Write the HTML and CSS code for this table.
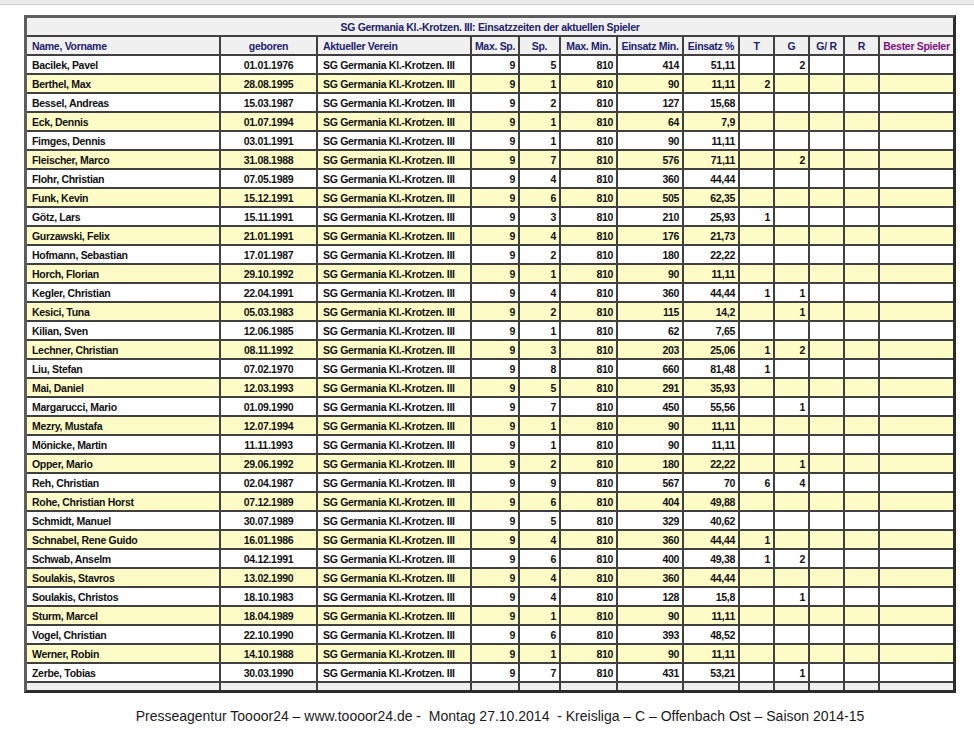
FILE: index.html
```html
<!DOCTYPE html>
<html lang="de">
<head>
<meta charset="utf-8">
<title>Einsatzzeiten</title>
<link rel="stylesheet" href="styles.css">
</head>
<body>
<div class="topbar"></div>
<div class="frame">
  <div class="grid">
    <div class="c title">SG Germania Kl.-Krotzen. III: Einsatzzeiten der aktuellen Spieler</div>
    <div class="row head">
      <div class="c l">Name, Vorname</div><div class="c m">geboren</div><div class="c l">Aktueller Verein</div><div class="c m">Max. Sp.</div><div class="c m">Sp.</div><div class="c m">Max. Min.</div><div class="c m">Einsatz Min.</div><div class="c m">Einsatz %</div><div class="c m">T</div><div class="c m">G</div><div class="c m">G/ R</div><div class="c m">R</div><div class="c m best">Bester Spieler</div>
    </div>
    <div class="row"><div class="c l">Bacilek, Pavel</div><div class="c m">01.01.1976</div><div class="c l">SG Germania Kl.-Krotzen. III</div><div class="c r">9</div><div class="c r">5</div><div class="c r">810</div><div class="c r">414</div><div class="c r">51,11</div><div class="c r"></div><div class="c r">2</div><div class="c r"></div><div class="c r"></div><div class="c r"></div></div>
    <div class="row alt"><div class="c l">Berthel, Max</div><div class="c m">28.08.1995</div><div class="c l">SG Germania Kl.-Krotzen. III</div><div class="c r">9</div><div class="c r">1</div><div class="c r">810</div><div class="c r">90</div><div class="c r">11,11</div><div class="c r">2</div><div class="c r"></div><div class="c r"></div><div class="c r"></div><div class="c r"></div></div>
    <div class="row"><div class="c l">Bessel, Andreas</div><div class="c m">15.03.1987</div><div class="c l">SG Germania Kl.-Krotzen. III</div><div class="c r">9</div><div class="c r">2</div><div class="c r">810</div><div class="c r">127</div><div class="c r">15,68</div><div class="c r"></div><div class="c r"></div><div class="c r"></div><div class="c r"></div><div class="c r"></div></div>
    <div class="row alt"><div class="c l">Eck, Dennis</div><div class="c m">01.07.1994</div><div class="c l">SG Germania Kl.-Krotzen. III</div><div class="c r">9</div><div class="c r">1</div><div class="c r">810</div><div class="c r">64</div><div class="c r">7,9</div><div class="c r"></div><div class="c r"></div><div class="c r"></div><div class="c r"></div><div class="c r"></div></div>
    <div class="row"><div class="c l">Fimges, Dennis</div><div class="c m">03.01.1991</div><div class="c l">SG Germania Kl.-Krotzen. III</div><div class="c r">9</div><div class="c r">1</div><div class="c r">810</div><div class="c r">90</div><div class="c r">11,11</div><div class="c r"></div><div class="c r"></div><div class="c r"></div><div class="c r"></div><div class="c r"></div></div>
    <div class="row alt"><div class="c l">Fleischer, Marco</div><div class="c m">31.08.1988</div><div class="c l">SG Germania Kl.-Krotzen. III</div><div class="c r">9</div><div class="c r">7</div><div class="c r">810</div><div class="c r">576</div><div class="c r">71,11</div><div class="c r"></div><div class="c r">2</div><div class="c r"></div><div class="c r"></div><div class="c r"></div></div>
    <div class="row"><div class="c l">Flohr, Christian</div><div class="c m">07.05.1989</div><div class="c l">SG Germania Kl.-Krotzen. III</div><div class="c r">9</div><div class="c r">4</div><div class="c r">810</div><div class="c r">360</div><div class="c r">44,44</div><div class="c r"></div><div class="c r"></div><div class="c r"></div><div class="c r"></div><div class="c r"></div></div>
    <div class="row alt"><div class="c l">Funk, Kevin</div><div class="c m">15.12.1991</div><div class="c l">SG Germania Kl.-Krotzen. III</div><div class="c r">9</div><div class="c r">6</div><div class="c r">810</div><div class="c r">505</div><div class="c r">62,35</div><div class="c r"></div><div class="c r"></div><div class="c r"></div><div class="c r"></div><div class="c r"></div></div>
    <div class="row"><div class="c l">Götz, Lars</div><div class="c m">15.11.1991</div><div class="c l">SG Germania Kl.-Krotzen. III</div><div class="c r">9</div><div class="c r">3</div><div class="c r">810</div><div class="c r">210</div><div class="c r">25,93</div><div class="c r">1</div><div class="c r"></div><div class="c r"></div><div class="c r"></div><div class="c r"></div></div>
    <div class="row alt"><div class="c l">Gurzawski, Felix</div><div class="c m">21.01.1991</div><div class="c l">SG Germania Kl.-Krotzen. III</div><div class="c r">9</div><div class="c r">4</div><div class="c r">810</div><div class="c r">176</div><div class="c r">21,73</div><div class="c r"></div><div class="c r"></div><div class="c r"></div><div class="c r"></div><div class="c r"></div></div>
    <div class="row"><div class="c l">Hofmann, Sebastian</div><div class="c m">17.01.1987</div><div class="c l">SG Germania Kl.-Krotzen. III</div><div class="c r">9</div><div class="c r">2</div><div class="c r">810</div><div class="c r">180</div><div class="c r">22,22</div><div class="c r"></div><div class="c r"></div><div class="c r"></div><div class="c r"></div><div class="c r"></div></div>
    <div class="row alt"><div class="c l">Horch, Florian</div><div class="c m">29.10.1992</div><div class="c l">SG Germania Kl.-Krotzen. III</div><div class="c r">9</div><div class="c r">1</div><div class="c r">810</div><div class="c r">90</div><div class="c r">11,11</div><div class="c r"></div><div class="c r"></div><div class="c r"></div><div class="c r"></div><div class="c r"></div></div>
    <div class="row"><div class="c l">Kegler, Christian</div><div class="c m">22.04.1991</div><div class="c l">SG Germania Kl.-Krotzen. III</div><div class="c r">9</div><div class="c r">4</div><div class="c r">810</div><div class="c r">360</div><div class="c r">44,44</div><div class="c r">1</div><div class="c r">1</div><div class="c r"></div><div class="c r"></div><div class="c r"></div></div>
    <div class="row alt"><div class="c l">Kesici, Tuna</div><div class="c m">05.03.1983</div><div class="c l">SG Germania Kl.-Krotzen. III</div><div class="c r">9</div><div class="c r">2</div><div class="c r">810</div><div class="c r">115</div><div class="c r">14,2</div><div class="c r"></div><div class="c r">1</div><div class="c r"></div><div class="c r"></div><div class="c r"></div></div>
    <div class="row"><div class="c l">Kilian, Sven</div><div class="c m">12.06.1985</div><div class="c l">SG Germania Kl.-Krotzen. III</div><div class="c r">9</div><div class="c r">1</div><div class="c r">810</div><div class="c r">62</div><div class="c r">7,65</div><div class="c r"></div><div class="c r"></div><div class="c r"></div><div class="c r"></div><div class="c r"></div></div>
    <div class="row alt"><div class="c l">Lechner, Christian</div><div class="c m">08.11.1992</div><div class="c l">SG Germania Kl.-Krotzen. III</div><div class="c r">9</div><div class="c r">3</div><div class="c r">810</div><div class="c r">203</div><div class="c r">25,06</div><div class="c r">1</div><div class="c r">2</div><div class="c r"></div><div class="c r"></div><div class="c r"></div></div>
    <div class="row"><div class="c l">Liu, Stefan</div><div class="c m">07.02.1970</div><div class="c l">SG Germania Kl.-Krotzen. III</div><div class="c r">9</div><div class="c r">8</div><div class="c r">810</div><div class="c r">660</div><div class="c r">81,48</div><div class="c r">1</div><div class="c r"></div><div class="c r"></div><div class="c r"></div><div class="c r"></div></div>
    <div class="row alt"><div class="c l">Mai, Daniel</div><div class="c m">12.03.1993</div><div class="c l">SG Germania Kl.-Krotzen. III</div><div class="c r">9</div><div class="c r">5</div><div class="c r">810</div><div class="c r">291</div><div class="c r">35,93</div><div class="c r"></div><div class="c r"></div><div class="c r"></div><div class="c r"></div><div class="c r"></div></div>
    <div class="row"><div class="c l">Margarucci, Mario</div><div class="c m">01.09.1990</div><div class="c l">SG Germania Kl.-Krotzen. III</div><div class="c r">9</div><div class="c r">7</div><div class="c r">810</div><div class="c r">450</div><div class="c r">55,56</div><div class="c r"></div><div class="c r">1</div><div class="c r"></div><div class="c r"></div><div class="c r"></div></div>
    <div class="row alt"><div class="c l">Mezry, Mustafa</div><div class="c m">12.07.1994</div><div class="c l">SG Germania Kl.-Krotzen. III</div><div class="c r">9</div><div class="c r">1</div><div class="c r">810</div><div class="c r">90</div><div class="c r">11,11</div><div class="c r"></div><div class="c r"></div><div class="c r"></div><div class="c r"></div><div class="c r"></div></div>
    <div class="row"><div class="c l">Mönicke, Martin</div><div class="c m">11.11.1993</div><div class="c l">SG Germania Kl.-Krotzen. III</div><div class="c r">9</div><div class="c r">1</div><div class="c r">810</div><div class="c r">90</div><div class="c r">11,11</div><div class="c r"></div><div class="c r"></div><div class="c r"></div><div class="c r"></div><div class="c r"></div></div>
    <div class="row alt"><div class="c l">Opper, Mario</div><div class="c m">29.06.1992</div><div class="c l">SG Germania Kl.-Krotzen. III</div><div class="c r">9</div><div class="c r">2</div><div class="c r">810</div><div class="c r">180</div><div class="c r">22,22</div><div class="c r"></div><div class="c r">1</div><div class="c r"></div><div class="c r"></div><div class="c r"></div></div>
    <div class="row"><div class="c l">Reh, Christian</div><div class="c m">02.04.1987</div><div class="c l">SG Germania Kl.-Krotzen. III</div><div class="c r">9</div><div class="c r">9</div><div class="c r">810</div><div class="c r">567</div><div class="c r">70</div><div class="c r">6</div><div class="c r">4</div><div class="c r"></div><div class="c r"></div><div class="c r"></div></div>
    <div class="row alt"><div class="c l">Rohe, Christian Horst</div><div class="c m">07.12.1989</div><div class="c l">SG Germania Kl.-Krotzen. III</div><div class="c r">9</div><div class="c r">6</div><div class="c r">810</div><div class="c r">404</div><div class="c r">49,88</div><div class="c r"></div><div class="c r"></div><div class="c r"></div><div class="c r"></div><div class="c r"></div></div>
    <div class="row"><div class="c l">Schmidt, Manuel</div><div class="c m">30.07.1989</div><div class="c l">SG Germania Kl.-Krotzen. III</div><div class="c r">9</div><div class="c r">5</div><div class="c r">810</div><div class="c r">329</div><div class="c r">40,62</div><div class="c r"></div><div class="c r"></div><div class="c r"></div><div class="c r"></div><div class="c r"></div></div>
    <div class="row alt"><div class="c l">Schnabel, Rene Guido</div><div class="c m">16.01.1986</div><div class="c l">SG Germania Kl.-Krotzen. III</div><div class="c r">9</div><div class="c r">4</div><div class="c r">810</div><div class="c r">360</div><div class="c r">44,44</div><div class="c r">1</div><div class="c r"></div><div class="c r"></div><div class="c r"></div><div class="c r"></div></div>
    <div class="row"><div class="c l">Schwab, Anselm</div><div class="c m">04.12.1991</div><div class="c l">SG Germania Kl.-Krotzen. III</div><div class="c r">9</div><div class="c r">6</div><div class="c r">810</div><div class="c r">400</div><div class="c r">49,38</div><div class="c r">1</div><div class="c r">2</div><div class="c r"></div><div class="c r"></div><div class="c r"></div></div>
    <div class="row alt"><div class="c l">Soulakis, Stavros</div><div class="c m">13.02.1990</div><div class="c l">SG Germania Kl.-Krotzen. III</div><div class="c r">9</div><div class="c r">4</div><div class="c r">810</div><div class="c r">360</div><div class="c r">44,44</div><div class="c r"></div><div class="c r"></div><div class="c r"></div><div class="c r"></div><div class="c r"></div></div>
    <div class="row"><div class="c l">Soulakis, Christos</div><div class="c m">18.10.1983</div><div class="c l">SG Germania Kl.-Krotzen. III</div><div class="c r">9</div><div class="c r">4</div><div class="c r">810</div><div class="c r">128</div><div class="c r">15,8</div><div class="c r"></div><div class="c r">1</div><div class="c r"></div><div class="c r"></div><div class="c r"></div></div>
    <div class="row alt"><div class="c l">Sturm, Marcel</div><div class="c m">18.04.1989</div><div class="c l">SG Germania Kl.-Krotzen. III</div><div class="c r">9</div><div class="c r">1</div><div class="c r">810</div><div class="c r">90</div><div class="c r">11,11</div><div class="c r"></div><div class="c r"></div><div class="c r"></div><div class="c r"></div><div class="c r"></div></div>
    <div class="row"><div class="c l">Vogel, Christian</div><div class="c m">22.10.1990</div><div class="c l">SG Germania Kl.-Krotzen. III</div><div class="c r">9</div><div class="c r">6</div><div class="c r">810</div><div class="c r">393</div><div class="c r">48,52</div><div class="c r"></div><div class="c r"></div><div class="c r"></div><div class="c r"></div><div class="c r"></div></div>
    <div class="row alt"><div class="c l">Werner, Robin</div><div class="c m">14.10.1988</div><div class="c l">SG Germania Kl.-Krotzen. III</div><div class="c r">9</div><div class="c r">1</div><div class="c r">810</div><div class="c r">90</div><div class="c r">11,11</div><div class="c r"></div><div class="c r"></div><div class="c r"></div><div class="c r"></div><div class="c r"></div></div>
    <div class="row"><div class="c l">Zerbe, Tobias</div><div class="c m">30.03.1990</div><div class="c l">SG Germania Kl.-Krotzen. III</div><div class="c r">9</div><div class="c r">7</div><div class="c r">810</div><div class="c r">431</div><div class="c r">53,21</div><div class="c r"></div><div class="c r">1</div><div class="c r"></div><div class="c r"></div><div class="c r"></div></div>
    <div class="row foot"><div class="c"></div><div class="c"></div><div class="c"></div><div class="c"></div><div class="c"></div><div class="c"></div><div class="c"></div><div class="c"></div><div class="c"></div><div class="c"></div><div class="c"></div><div class="c"></div><div class="c"></div></div>
  </div>
</div>
<p class="footer">Presseagentur Toooor24 – www.toooor24.de -  Montag 27.10.2014  - Kreisliga – C – Offenbach Ost – Saison 2014-15</p>
</body>
</html>
```

FILE: styles.css
```css
html, body {
  margin: 0;
  padding: 0;
  background: #ffffff;
}

body {
  font-family: "Liberation Sans", Arial, sans-serif;
}

.topbar {
  height: 4px;
  background: #ebebeb;
  border-bottom: 1px solid #cbcbcb;
}

.frame {
  margin: 10px 0 0 24px;
  width: 926px;
  border-style: solid;
  border-width: 3px;
  border-color: #5e5e5e #2c2c2c #2c2c2c #5e5e5e;
}

.grid {
  display: grid;
  grid-template-columns: 192px 95px 152px 46px 39px 55px 64px 54px 33px 33px 33px 33px 73px;
  grid-template-rows: 17px 17px repeat(33, 17px) 7px;
  gap: 2px;
  background: #404040;
  font-size: 10.5px;
  font-weight: 700;
  letter-spacing: -0.3px;
  line-height: 17px;
  color: #111111;
}

.row {
  display: contents;
}

.c {
  background: #ffffff;
  white-space: nowrap;
  overflow: hidden;
  line-height: 19px;
}

.row.alt .c {
  background: #fdfbc6;
}

.title {
  grid-column: 1 / -1;
  background: #f0f0f0;
  text-align: center;
  color: #22226e;
}

.row.head .c {
  background: #f0f0f0;
  color: #1e1e6e;
}

.row.head .best {
  color: #7e127e;
}

.row.foot .c {
  background: #efefef;
}

.l {
  text-align: left;
  padding-left: 5px;
}

.m {
  text-align: center;
}

.r {
  text-align: right;
  padding-right: 3px;
}

.footer {
  margin: 14px 0 0 0;
  padding-left: 26px;
  text-align: center;
  white-space: pre;
  font-size: 14px;
  line-height: 18px;
  color: #1a1a1a;
}
```
